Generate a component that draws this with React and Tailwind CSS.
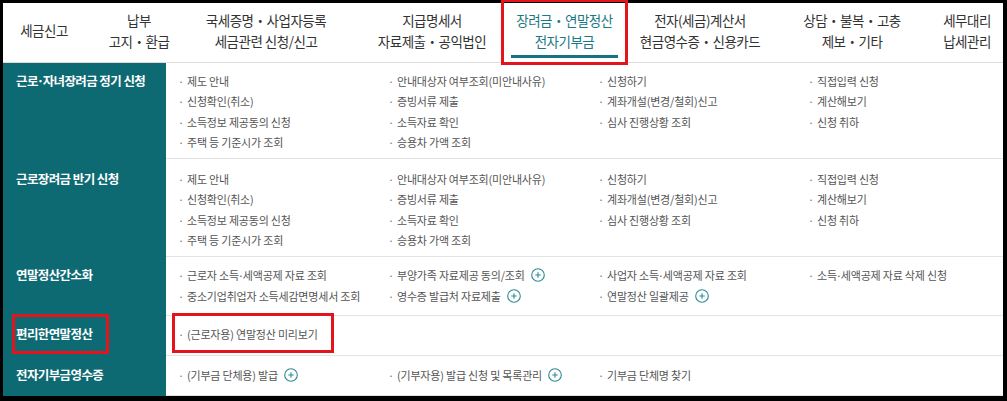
import React from "react";

const FONT = { fontFamily: '"Noto Sans CJK KR", "Noto Sans", sans-serif' };

function Plus() {
  return (
    <svg width="14" height="14" viewBox="0 0 14 14" className="inline-block ml-[6px] align-[-2px]">
      <circle cx="7" cy="7" r="6.3" fill="none" stroke="#2b8a92" strokeWidth="1.1" />
      <path d="M7 4.3v5.4M4.3 7h5.4" stroke="#2b8a92" strokeWidth="1.1" />
    </svg>
  );
}

function Txt({ s }) {
  const parts = s.split("·");
  return (
    <>
      {parts.map((p, i) => (
        <React.Fragment key={i}>
          {i > 0 && <span className="inline-block mx-[-1px]">·</span>}
          {p}
        </React.Fragment>
      ))}
    </>
  );
}

const rows = [
  {
    label: "근로·자녀장려금 정기 신청",
    h: "h-[96px]",
    lead: "leading-[20.3px]",
    cols: [
      ["제도 안내", "신청확인(취소)", "소득정보 제공동의 신청", "주택 등 기준시가 조회"],
      ["안내대상자 여부조회(미안내사유)", "증빙서류 제출", "소득자료 확인", "승용차 가액 조회"],
      ["신청하기", "계좌개설(변경/철회)신고", "심사 진행상황 조회"],
      ["직접입력 신청", "계산해보기", "신청 취하"],
    ],
  },
  {
    label: "근로장려금 반기 신청",
    h: "h-[98px]",
    lead: "leading-[20.3px]",
    top: "pt-[10px]",
    cols: [
      ["제도 안내", "신청확인(취소)", "소득정보 제공동의 신청", "주택 등 기준시가 조회"],
      ["안내대상자 여부조회(미안내사유)", "증빙서류 제출", "소득자료 확인", "승용차 가액 조회"],
      ["신청하기", "계좌개설(변경/철회)신고", "심사 진행상황 조회"],
      ["직접입력 신청", "계산해보기", "신청 취하"],
    ],
  },
  {
    label: "연말정산간소화",
    h: "h-[59px]",
    lead: "leading-[21px]",
    cols: [
      ["근로자 소득·세액공제 자료 조회", "중소기업취업자 소득세감면명세서 조회"],
      [{ t: "부양가족 자료제공 동의/조회", p: true }, { t: "영수증 발급처 자료제출", p: true }],
      ["사업자 소득·세액공제 자료 조회", { t: "연말정산 일괄제공", p: true }],
      ["소득·세액공제 자료 삭제 신청"],
    ],
  },
  {
    label: "편리한연말정산",
    h: "h-[40px]",
    lead: "leading-[20px]",
    mark: true,
    cols: [["(근로자용) 연말정산 미리보기"], [], [], []],
  },
  {
    label: "전자기부금영수증",
    h: "h-[40px]",
    lead: "leading-[20px]",
    top: "pt-[9px]",
    cols: [
      [{ t: "(기부금 단체용) 발급", p: true }],
      [{ t: "(기부자용) 발급 신청 및 목록관리", p: true }],
      ["기부금 단체명 찾기"],
      [],
    ],
  },
];

function Item({ it }) {
  const t = typeof it === "string" ? it : it.t;
  const p = typeof it === "string" ? false : it.p;
  return (
    <div className="whitespace-nowrap">
      <span className="text-[#777] mr-[3px]">·</span>
      <Txt s={t} />
      {p && <Plus />}
    </div>
  );
}

const tabs = [
  { l: ["세금신고"], w: "w-[82px]", ml: "ml-0" },
  { l: ["납부", "고지・환급"], w: "w-[100px]", ml: "ml-[4px]" },
  { l: ["국세증명・사업자등록", "세금관련 신청/신고"], w: "w-[150px]", ml: "ml-[2px]" },
  { l: ["지급명세서", "자료제출・공익법인"], w: "w-[136px]", ml: "ml-[23px]" },
  { l: ["장려금・연말정산", "전자기부금"], w: "w-[125px]", ml: "ml-[2px]", active: true },
  { l: ["전자(세금)계산서", "현금영수증・신용카드"], w: "w-[140px]", ml: "ml-[3px]" },
  { l: ["상담・불복・고충", "제보・기타"], w: "w-[130px]", ml: "ml-[17px]" },
  { l: ["세무대리", "납세관리"], w: "w-[66px]", ml: "ml-[17px]" },
];

export default function App() {
  return (
    <div className="w-[1007px] h-[401px] bg-black pt-[3px] pl-[3px] pr-[4px] pb-[6px] overflow-hidden" style={FONT}>
      <div className="bg-white h-full overflow-visible">
        {/* header */}
        <div className="flex h-[60px] border-b border-[#dedede] relative">
          {tabs.map((tb, i) => (
            <div
              key={i}
              className={`${tb.w} ${tb.ml} relative flex flex-col items-center justify-start pt-[7px] text-[13.5px] leading-[20.5px] tracking-[-0.5px] whitespace-nowrap ${
                tb.active ? "text-[#1a7a83]" : "text-[#333]"
              }`}
            >
              <div className="h-[41px] flex flex-col justify-center items-center">
                {tb.l.map((s, j) => (
                  <div key={j}>{s}</div>
                ))}
              </div>
              {tb.active && (
                <>
                  <div className="mt-[4px] w-[107px] h-[3px] bg-[#16737c]" />
                  <div className="absolute left-[-1px] right-[-1px] top-[-4px] bottom-[-3px] border-[3px] border-[#e3141c] pointer-events-none" />
                </>
              )}
            </div>
          ))}
        </div>
        {/* body */}
        {rows.map((r, i) => (
          <div key={i} className={`flex ${r.h}`}>
            <div className="w-[163px] shrink-0 bg-[#0d6a73] relative">
              <div className={`${r.top || "pt-[8px]"} pl-[13px] text-white font-bold text-[12.5px] leading-[20px] tracking-[-0.6px] whitespace-nowrap`}>
                <Txt s={r.label} />
              </div>
              {r.mark && (
                <div className="absolute left-[9px] top-[-2px] w-[97px] h-[40px] border-[3px] border-[#e3141c]" />
              )}
            </div>
            <div className={`flex-1 relative border-b border-[#e3e3e3] pl-[12px] ${r.top || "pt-[8px]"} grid grid-cols-[210px_210px_210px_1fr] text-[11px] ${r.lead} text-[#555] tracking-[-0.2px]`}>
              {r.cols.map((c, j) => (
                <div key={j}>
                  {c.map((it, k) => (
                    <Item key={k} it={it} />
                  ))}
                </div>
              ))}
              {r.mark && (
                <div className="absolute left-[6px] top-[-3px] w-[162px] h-[40px] border-[3px] border-[#e3141c]" />
              )}
            </div>
          </div>
        ))}
      </div>
    </div>
  );
}
